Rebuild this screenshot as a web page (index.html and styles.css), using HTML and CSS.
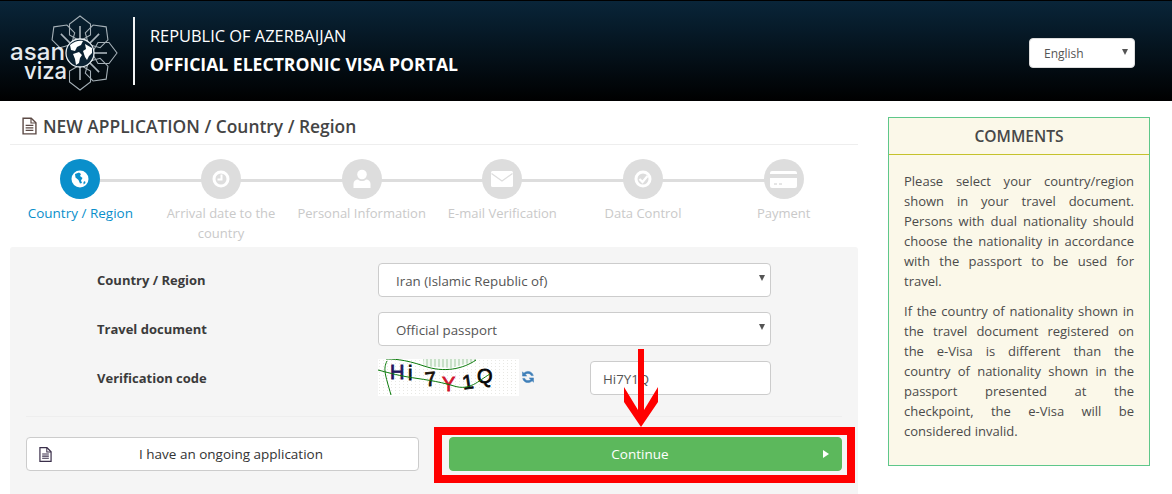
FILE: index.html
```html
<!DOCTYPE html>
<html lang="en">
<head>
<meta charset="utf-8">
<title>Official Electronic Visa Portal</title>
<link rel="stylesheet" href="styles.css">
</head>
<body>
<svg class="defs" width="0" height="0" aria-hidden="true">
  <defs>
    <symbol id="doc" viewBox="0 0 14 16">
      <path d="M1 .7h7.6L13 5v10.300H1z" fill="none" stroke="currentColor" stroke-width="1.300"/>
      <path d="M8.400 1v4.200H13" fill="none" stroke="currentColor" stroke-width="1.100"/>
      <path d="M3.400 7.400h7.200M3.400 9.700h7.200M3.400 12h7.200" stroke="currentColor" stroke-width="1.200"/>
    </symbol>
  </defs>
</svg>
<header class="topbar">
  <div class="brand">
    <svg class="logo" viewBox="0 0 125 84" width="125" height="84">
      <defs>
        <g id="petal">
          <path d="M0-37 10.500-29V-18L0-12-10.500-18V-29Z" fill="none" stroke="#a4afb6" stroke-width="1.100"/>
          <path d="M0-14V-27" stroke="#aab4bb" stroke-width="1.600"/>
        </g>
      </defs>
      <g transform="translate(72 44)">
        <use href="#petal"/>
        <use href="#petal" transform="rotate(45)"/>
        <use href="#petal" transform="rotate(90)"/>
        <use href="#petal" transform="rotate(135)"/>
        <use href="#petal" transform="rotate(180)"/>
        <use href="#petal" transform="rotate(-45)"/>
        <circle r="14" fill="#0b2233" stroke="#e8eef2" stroke-width="1.300"/>
        <path d="M-10-8C-6-12 0-13 3-12L1-8-3-6-5-2-9-3ZM-7 1-1-1 2 2 0 5-1 10-4 12-5 6ZM5-9 12-5 12 0 9 3 7 7 5 4 3-2 6-4Z" fill="#fff"/>
      </g>
      <text class="logo-word" x="2" y="51" textLength="55" lengthAdjust="spacingAndGlyphs">asan</text>
      <text class="logo-word" x="16" y="70" textLength="43" lengthAdjust="spacingAndGlyphs">viza</text>
    </svg>
    <div class="portal">
      <div class="portal-sub">REPUBLIC OF AZERBAIJAN</div>
      <div class="portal-name">OFFICIAL ELECTRONIC VISA PORTAL</div>
    </div>
  </div>
  <div class="select-wrap lang">
    <select class="control lang-select"><option>English</option></select>
  </div>
</header>

<div class="layout">
  <main class="content">
    <h1 class="page-title">
      <svg class="title-icon" width="15" height="18"><use href="#doc"/></svg>
      NEW APPLICATION / Country / Region
    </h1>

    <ol class="steps">
      <li class="step active">
        <span class="bullet">
          <svg width="20" height="20" viewBox="0 0 20 20"><circle cx="10" cy="10" r="8.500" fill="#fff"/><path d="M5 5 9 3.500 11 5 10 7 12.500 9 11 11.500 12 14 10 14.500 8.500 11 5.500 8.500ZM13.500 13 15 12 15.500 14 13.500 15.500Z" fill="#0a8fcb"/></svg>
        </span>
        <span class="step-label">Country / Region</span>
      </li>
      <li class="step">
        <span class="bullet">
          <svg width="20" height="20" viewBox="0 0 20 20"><circle cx="10" cy="10" r="7" fill="none" stroke="#fff" stroke-width="3"/><path d="M10.500 5.500V10.500H6.500" fill="none" stroke="#fff" stroke-width="2"/></svg>
        </span>
        <span class="step-label">Arrival date to the country</span>
      </li>
      <li class="step">
        <span class="bullet">
          <svg width="20" height="20" viewBox="0 0 20 20"><circle cx="10" cy="5.500" r="4.800" fill="#fff"/><path d="M1.500 19V15C1.500 12 3.500 10.500 6 10.500 7 11.500 8.500 12 10 12S13 11.500 14 10.500C16.500 10.500 18.500 12 18.500 15V19Z" fill="#fff"/></svg>
        </span>
        <span class="step-label">Personal Information</span>
      </li>
      <li class="step">
        <span class="bullet">
          <svg width="22" height="16" viewBox="0 0 22 16"><rect width="22" height="16" rx="1.500" fill="#fff"/><path d="M.5 2.500 11 10 21.500 2.500" fill="none" stroke="#ddd" stroke-width="1.300"/></svg>
        </span>
        <span class="step-label">E-mail Verification</span>
      </li>
      <li class="step">
        <span class="bullet">
          <svg width="20" height="20" viewBox="0 0 20 20"><circle cx="10" cy="10" r="7" fill="none" stroke="#fff" stroke-width="3"/><path d="M6.500 10 9.500 13 14.500 7" fill="none" stroke="#fff" stroke-width="2.200"/></svg>
        </span>
        <span class="step-label">Data Control</span>
      </li>
      <li class="step">
        <span class="bullet">
          <svg width="27" height="17" viewBox="0 0 27 17"><rect width="27" height="17" rx="2" fill="#fff"/><rect y="3" width="27" height="4" fill="#ddd"/><path d="M4 13H7M9 13H12" stroke="#ccc" stroke-width="1"/></svg>
        </span>
        <span class="step-label">Payment</span>
      </li>
    </ol>

    <form class="panel">
      <div class="field">
        <label class="field-label">Country / Region</label>
        <div class="select-wrap field-control">
          <select class="control"><option>Iran (Islamic Republic of)</option></select>
        </div>
      </div>
      <div class="field">
        <label class="field-label">Travel document</label>
        <div class="select-wrap field-control">
          <select class="control"><option>Official passport</option></select>
        </div>
      </div>
      <div class="field">
        <label class="field-label">Verification code</label>
        <div class="captcha-row">
          <svg class="captcha" width="141" height="37" viewBox="0 0 141 37">
            <defs>
              <pattern id="noise" width="4" height="3" patternUnits="userSpaceOnUse">
                <rect width="4" height="3" fill="#fff"/>
                <rect x="1" y="1" width="1" height="1" fill="#e8e8e4"/>
              </pattern>
              <pattern id="bars" width="4" height="4" patternUnits="userSpaceOnUse">
                <rect width="2" height="4" fill="#c8e0c8"/>
                <rect x="2" width="2" height="4" fill="#f2f8f2"/>
              </pattern>
            </defs>
            <rect width="141" height="37" fill="url(#noise)"/>
            <path d="M45 0H98V2L73 9 46 7Z" fill="url(#bars)"/>
            <path d="M8 0C14 0 26 0 46 7S85 10 98 1" fill="none" stroke="#0a7a0a" stroke-width="1"/>
            <path d="M9 2C5 10 7 15 13 36" fill="none" stroke="#0a7a0a" stroke-width="1"/>
            <text class="cap" x="12" y="20" fill="#23165e" stroke="#23165e">H</text>
            <text class="cap" x="30" y="21" fill="#111" stroke="#111">i</text>
            <text class="cap" x="47" y="27" fill="#1c1208" stroke="#1c1208" transform="rotate(-6 52 20)">7</text>
            <text class="cap" x="64" y="32" fill="#d2142d" stroke="#d2142d">Y</text>
            <text class="cap" x="84" y="30" fill="#0d0d0d" stroke="#0d0d0d" transform="rotate(-8 88 22)">1</text>
            <text class="cap" x="99" y="24" fill="#050505" stroke="#050505">Q</text>
            <path d="M0 11C8 13 18 16 30 18S60 22 76 27 100 22 112 15" fill="none" stroke="#0a7a0a" stroke-width="1"/>
          </svg>
          <svg class="refresh" width="14" height="14" viewBox="0 0 14 14">
            <path d="M12.300 5.600C11.700 3 9.600 1.400 7 1.400 5.400 1.400 3.900 2.100 2.900 3.200L1.500 1.800V6.100H5.800L4.300 4.600C5 3.900 6 3.400 7 3.400 8.400 3.400 9.700 4.300 10.200 5.600ZM1.700 8.400C2.300 11 4.400 12.600 7 12.600 8.600 12.600 10.100 11.900 11.100 10.800L12.500 12.200V7.900H8.200L9.700 9.400C9 10.100 8 10.600 7 10.600 5.600 10.600 4.300 9.700 3.800 8.400Z" fill="#3f7fb8" stroke="#3f7fb8" stroke-width=".5"/>
          </svg>
          <input class="control code-input" type="text" value="Hi7Y1Q">
        </div>
      </div>
      <div class="actions">
        <button class="btn btn-plain" type="button">
          <svg class="btn-icon" width="13" height="15"><use href="#doc"/></svg>
          <span class="btn-text">I have an ongoing application</span>
        </button>
        <button class="btn btn-go" type="button">
          <span class="btn-text">Continue</span>
          <span class="caret-right"></span>
        </button>
      </div>
      <div class="mark-frame"></div>
      <svg class="mark-arrow" width="34" height="78" viewBox="0 0 34 78">
        <path d="M0 38 14 61V0H20V61L34 38V53L17 78 0 53Z" fill="#f00"/>
      </svg>
    </form>
  </main>

  <aside class="notes">
    <h2 class="notes-head">COMMENTS</h2>
    <div class="notes-body">
      <p>Please select your country/region shown in your travel document. Persons with dual nationality should choose the nationality in accordance with the passport to be used for travel.</p>
      <p>If the country of nationality shown in the travel document registered on the e-Visa is different than the country of nationality shown in the passport presented at the checkpoint, the e-Visa will be considered invalid.</p>
    </div>
  </aside>
</div>
</body>
</html>
```
FILE: styles.css
```css
* { box-sizing: border-box; }
html, body { margin: 0; height: 494px; overflow: hidden; }
body { background: #fff; color: #333; font-family: "Open Sans", "Noto Sans", sans-serif; font-size: 13px; }
.defs { position: absolute; }

.topbar {
  height: 101px;
  border-top: 1px solid #000;
  padding-right: 37px;
  display: flex;
  align-items: center;
  justify-content: space-between;
  background: linear-gradient(#092539, #000);
}
.brand { display: flex; align-items: center; }
.logo { margin-left: 8px; display: block; }
.logo-word { font-family: "Inter", sans-serif; font-size: 24px; font-weight: 500; fill: #e6eaee; }
.portal {
  border-left: 2px solid #f2f4f5;
  height: 68px;
  padding: 0 0 2px 15px;
  display: flex;
  flex-direction: column;
  justify-content: center;
  gap: 8px;
  color: #fff;
  font-size: 16.400px;
  line-height: 20px;
}
.portal-name { font-weight: 700; font-size: 17.600px; }

.select-wrap { position: relative; }
.select-wrap::after {
  content: "";
  position: absolute;
  right: 6px;
  top: 12px;
  border-style: solid;
  border-width: 6px 3.500px 0;
  border-color: #555 transparent transparent;
  pointer-events: none;
}
.control {
  display: block;
  width: 100%;
  height: 34px;
  border: 1px solid #ccc;
  border-radius: 4px;
  background: #fff;
  color: #555;
  font: 13.300px "Open Sans", sans-serif;
  padding: 2px 12px 0 17px;
  appearance: none;
}
.lang { width: 106px; margin-top: 4px; }
.lang::after { top: 11px; right: 7px; }
.lang-select { height: 30px; padding: 0 0 0 14px; font-size: 12px; border-color: #ddd; }

.layout { display: flex; padding: 16px 22px 0 10px; gap: 30px; align-items: flex-start; height: 393px; }
.content { width: 848px; height: 393px; }
.page-title {
  margin: 0 0 14px;
  height: 28px;
  padding-left: 12px;
  border-bottom: 1px solid #eee;
  display: flex;
  align-items: flex-start;
  gap: 6px;
  font-size: 17.400px;
  font-weight: 600;
  line-height: 18px;
  color: #444;
}
.title-icon { color: #5c4a45; flex: none; }

.steps {
  list-style: none;
  margin: 0;
  padding: 0;
  width: 844px;
  height: 88px;
  display: grid;
  grid-template-columns: repeat(6, 1fr);
}
.step { position: relative; display: flex; flex-direction: column; align-items: center; text-align: center; color: #c9c9c9; line-height: 20px; padding: 0 4px; }
.step:not(:last-child)::after {
  content: "";
  position: absolute;
  left: 50%;
  width: 100%;
  top: 20px;
  height: 3px;
  background: #ddd;
}
.bullet {
  position: relative;
  z-index: 1;
  width: 40px;
  height: 40px;
  border-radius: 50%;
  background: #ddd;
  display: flex;
  align-items: center;
  justify-content: center;
  margin-bottom: 4px;
}
.step.active { color: #0a8fcb; font-size: 13.500px; }
.step.active .bullet { background: #0a8fcb; }
.step-label { display: block; }

.panel {
  position: relative;
  height: 247px;
  background: #f5f5f5;
  padding: 16px 16px 0;
  border-radius: 3px 3px 0 0;
}
.field { display: flex; align-items: center; height: 34px; margin-bottom: 15px; }
.field-label { width: 352px; padding-left: 71px; font-weight: 700; color: #3b3b3b; }
.field-control { width: 393px; }
.captcha-row { width: 393px; display: flex; align-items: flex-start; }
.captcha { display: block; flex: none; margin-top: -1px; }
.refresh { flex: none; margin: 10px 0 0 2px; }
.code-input { width: 181px; margin: 1px 0 0 55px; padding-left: 12px; flex: none; }

.actions {
  border-top: 1px solid #eee;
  margin-top: 21px;
  padding-top: 20px;
  display: flex;
  gap: 30px;
}
.btn {
  flex: none;
  width: 393px;
  height: 34px;
  border-radius: 4px;
  border: 1px solid #ccc;
  background: #fff;
  color: #333;
  font: 13.500px "Open Sans", sans-serif;
  display: flex;
  align-items: center;
  padding: 0 12px;
}
.btn-text { flex: 1; text-align: center; }
.btn-icon { flex: none; color: #3a2f4a; }
.btn-plain .btn-text { padding-left: 4px; }
.btn-go { background: #5cb85c; border-color: #5cb85c; color: #fff; padding: 0 12px 0 7px; }
.caret-right { border-style: solid; border-width: 4px 0 4px 6px; border-color: transparent transparent transparent #fff; }

.mark-frame {
  position: absolute;
  left: 424px;
  top: 180px;
  width: 421px;
  height: 56px;
  border: 8px solid #f00;
  pointer-events: none;
}
.mark-arrow { position: absolute; left: 614px; top: 102px; }

.cap { font-family: "Liberation Sans", sans-serif; font-size: 20px; stroke-width: .8px; }

.notes { width: 262px; flex: none; height: 349px; border: 1px solid #5ec78a; background: #fbf8e9; }
.notes-head {
  margin: 0;
  height: 37px;
  line-height: 36px;
  border-bottom: 1px solid #c5c22c;
  text-align: center;
  font-size: 15.600px;
  font-weight: 600;
  color: #484848;
}
.notes-body { padding: 16px 15px 0; font-size: 13px; line-height: 20px; color: #4b4b4b; text-align: justify; }
.notes-body p { margin: 0 0 10px; }
```
